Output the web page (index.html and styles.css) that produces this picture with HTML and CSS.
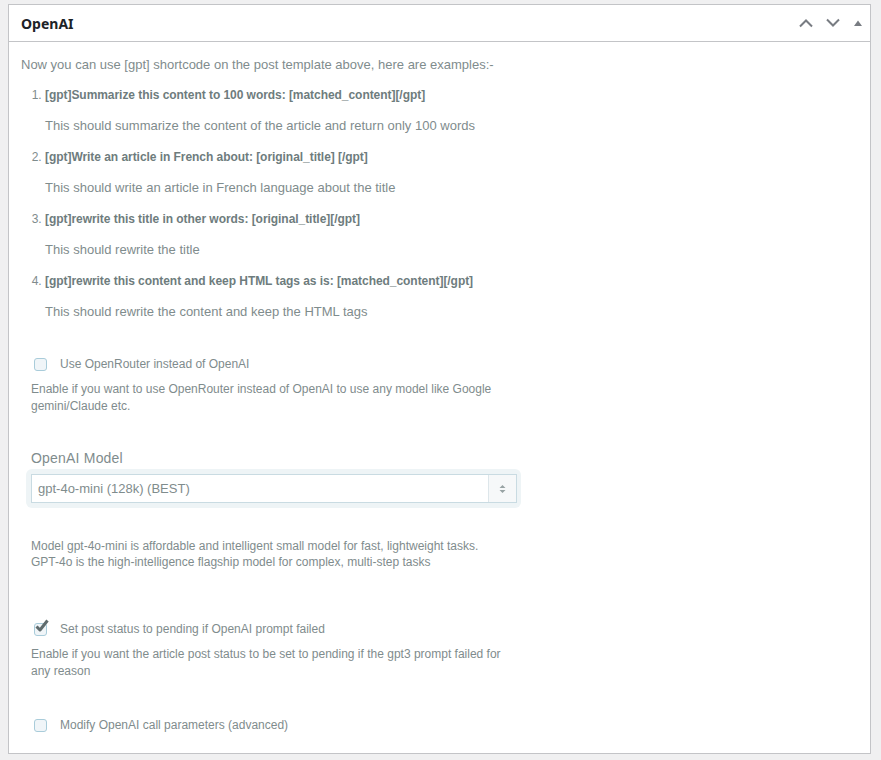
FILE: index.html
```html
<!DOCTYPE html>
<html lang="en">
<head>
    <meta charset="UTF-8">
    <meta name="viewport" content="width=device-width, initial-scale=1.0">
    <title>OpenAI settings</title>
    <link rel="stylesheet" href="styles.css">
</head>
<body>

<div class="postbox">
    <div class="postbox-header">
        <h2>OpenAI</h2>
        <div class="handle-actions">
            <button class="handle" aria-label="Move up">
                <svg width="16" height="10" viewBox="0 0 16 10"><path d="M2 8.5 L8 2.5 L14 8.5" fill="none" stroke="#787c82" stroke-width="2"/></svg>
            </button>
            <button class="handle" aria-label="Move down">
                <svg width="16" height="10" viewBox="0 0 16 10"><path d="M2 1.5 L8 7.5 L14 1.5" fill="none" stroke="#787c82" stroke-width="2"/></svg>
            </button>
            <button class="handle toggle" aria-label="Toggle panel">
                <svg width="8" height="6" viewBox="0 0 8 6"><path d="M0 6 L4 0.5 L8 6 Z" fill="#787c82"/></svg>
            </button>
        </div>
    </div>

    <div class="inside">
        <p class="intro">Now you can use [gpt] shortcode on the post template above, here are examples:-</p>

        <ol class="examples">
            <li>
                <strong>[gpt]Summarize this content to 100 words: [matched_content][/gpt]</strong>
                <p>This should summarize the content of the article and return only 100 words</p>
            </li>
            <li>
                <strong>[gpt]Write an article in French about: [original_title] [/gpt]</strong>
                <p>This should write an article in French language about the title</p>
            </li>
            <li>
                <strong>[gpt]rewrite this title in other words: [original_title][/gpt]</strong>
                <p>This should rewrite the title</p>
            </li>
            <li>
                <strong>[gpt]rewrite this content and keep HTML tags as is: [matched_content][/gpt]</strong>
                <p>This should rewrite the content and keep the HTML tags</p>
            </li>
        </ol>

        <div class="option option-router">
            <label class="check">
                <input type="checkbox">
                <span class="box"></span>
                Use OpenRouter instead of OpenAI
            </label>
            <p class="help">Enable if you want to use OpenRouter instead of OpenAI to use any model like Google gemini/Claude etc.</p>
        </div>

        <div class="option option-model">
            <label class="field-label" for="model">OpenAI Model</label>
            <div class="select-wrap">
                <div class="select">
                    <select id="model">
                        <option>gpt-4o-mini (128k) (BEST)</option>
                        <option>gpt-4o (128k)</option>
                    </select>
                    <span class="arrows">
                        <svg width="7" height="10" viewBox="0 0 7 10"><path d="M0.5 4 L3.5 1 L6.5 4 Z M0.5 6 L3.5 9 L6.5 6 Z" fill="#98a3a4"/></svg>
                    </span>
                </div>
            </div>
            <p class="help">Model gpt-4o-mini is affordable and intelligent small model for fast, lightweight tasks. GPT-4o is the high-intelligence flagship model for complex, multi-step tasks</p>
        </div>

        <div class="option option-pending">
            <label class="check">
                <input type="checkbox" checked>
                <span class="box">
                    <svg class="tick" width="16" height="15" viewBox="0 0 16 15"><path d="M2.5 7.5 L6 11 L13.5 1.5" fill="none" stroke="#5f6b6d" stroke-width="3" stroke-linejoin="round"/></svg>
                </span>
                Set post status to pending if OpenAI prompt failed
            </label>
            <p class="help">Enable if you want the article post status to be set to pending if the gpt3 prompt failed for any reason</p>
        </div>

        <div class="option option-params">
            <label class="check">
                <input type="checkbox">
                <span class="box"></span>
                Modify OpenAI call parameters (advanced)
            </label>
        </div>
    </div>
</div>

</body>
</html>
```

FILE: styles.css
```css
body {
    margin: 0;
    padding: 4px 10px 0 8px;
    background-color: #f0f0f1;
    font-family: "Liberation Sans", Arial, sans-serif;
    color: #7f8c8d;
}
.postbox {
    background: #fff;
    border: 1px solid #c3c4c7;
}
.postbox-header {
    display: flex;
    align-items: center;
    justify-content: space-between;
    height: 36px;
    border-bottom: 1px solid #c3c4c7;
}
.postbox-header h2 {
    margin: 0;
    padding-left: 12px;
    font-family: "Noto Sans", "Open Sans", sans-serif;
    font-size: 14px;
    font-weight: 700;
    color: #1d2327;
}
.handle-actions {
    display: flex;
    align-items: center;
}
.handle {
    display: flex;
    align-items: center;
    justify-content: center;
    width: 27px;
    height: 36px;
    padding: 0;
    border: none;
    background: none;
    cursor: pointer;
}
.handle.toggle {
    width: 24px;
}
.inside {
    padding: 14px 12px 19px;
}
.intro {
    margin: 0;
    font-size: 13px;
    line-height: 18px;
}
/* example shortcodes */
.examples {
    margin: 12px 0 0;
    padding-left: 24px;
    font-size: 12px;
    line-height: 18px;
}
.examples li + li {
    margin-top: 13px;
}
.examples strong {
    display: block;
    color: #6e7c7d;
    letter-spacing: -0.05px;
}
.examples p {
    margin: 13px 0 0;
    font-size: 13px;
    line-height: 18px;
}
.option {
    padding-left: 10px;
}
.option-router {
    margin-top: 34px;
}
.option-model {
    margin-top: 33px;
}
.option-pending {
    margin-top: 50px;
}
.option-params {
    margin-top: 36px;
}
.check {
    display: flex;
    align-items: center;
    height: 18px;
    font-size: 12px;
    cursor: pointer;
}
.check input {
    display: none;
}
.check .box {
    position: relative;
    width: 11px;
    height: 11px;
    margin: 0 13px 0 3px;
    border: 1px solid #a9ccda;
    border-radius: 3px;
    background: #f0f5f8;
}
.check .tick {
    position: absolute;
    left: -1px;
    top: -5px;
}
.help {
    margin: 8px 0 0;
    max-width: 475px;
    font-size: 12px;
    line-height: 17px;
}
.field-label {
    display: block;
    font-size: 14px;
    line-height: 20px;
    letter-spacing: 0.2px;
}
.select-wrap {
    width: 486px;
    margin: 1px 0 0 -5px;
    padding: 5px 4px 5px 5px;
    background: #eef4f6;
    border-radius: 6px;
}
.select {
    display: flex;
    height: 27px;
    border: 1px solid #c9dbe2;
    background: #fff;
}
.select select {
    flex: 1;
    appearance: none;
    border: none;
    background: transparent;
    padding: 0 6px;
    font-family: "Liberation Sans", Arial, sans-serif;
    font-size: 13px;
    color: #7f8c8d;
    outline: none;
}
.select .arrows {
    display: flex;
    align-items: center;
    justify-content: center;
    width: 27px;
    border-left: 1px solid #dde6ea;
    background: #f6f8f9;
}
.option-model .help {
    margin-top: 30px;
    line-height: 16px;
}
```
